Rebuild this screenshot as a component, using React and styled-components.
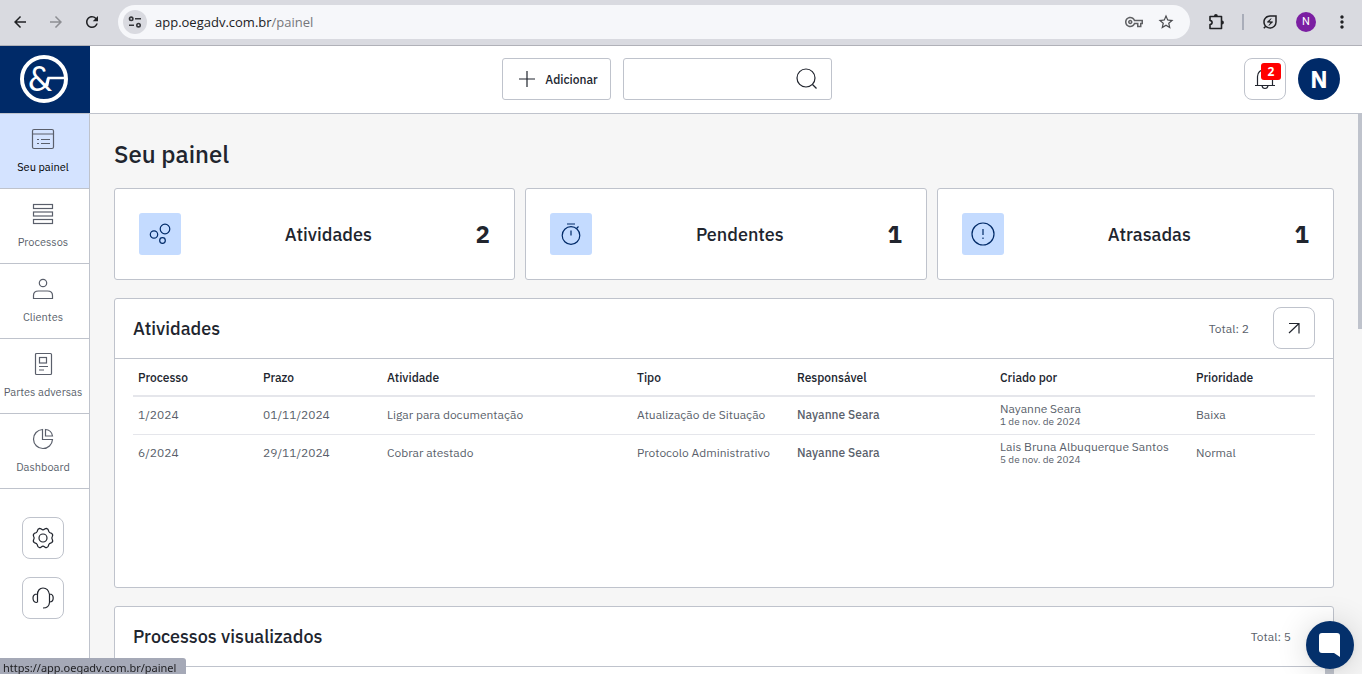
import React from 'react';
import styled, { createGlobalStyle, css } from 'styled-components';
import {
  MdArrowBack,
  MdArrowForward,
  MdRefresh,
  MdStarBorder,
  MdMoreVert,
  MdOutlineVpnKey,
  MdOutlineEnergySavingsLeaf,
} from 'react-icons/md';

const GlobalStyle = createGlobalStyle`
  *, *::before, *::after {
    box-sizing: border-box;
  }

  body {
    margin: 0;
    overflow: hidden;
    color: #21252e;
    background: #f6f6f6;
    font-family: "IBM Plex Sans", "Noto Sans", sans-serif;
    font-size: 12px;
  }

  button, input {
    font: inherit;
    color: inherit;
  }

  a {
    color: inherit;
    text-decoration: none;
  }

  h1, h2, p {
    margin: 0;
  }
`;

/* ---------- data ---------- */

const menu = [
  { label: 'Seu painel', icon: 'panel', active: true },
  { label: 'Processos', icon: 'rows' },
  { label: 'Clientes', icon: 'user' },
  { label: 'Partes adversas', icon: 'paper' },
  { label: 'Dashboard', icon: 'pie' },
];

const stats = [
  { label: 'Atividades', value: 2, icon: 'bubbles' },
  { label: 'Pendentes', value: 1, icon: 'timer' },
  { label: 'Atrasadas', value: 1, icon: 'alert' },
];

const columns = [
  { label: 'Processo', width: 125 },
  { label: 'Prazo', width: 124 },
  { label: 'Atividade', width: 250 },
  { label: 'Tipo', width: 160 },
  { label: 'Responsável', width: 203 },
  { label: 'Criado por', width: 196 },
  { label: 'Prioridade', width: 124 },
];

const activities = [
  {
    process: '1/2024',
    due: '01/11/2024',
    title: 'Ligar para documentação',
    type: 'Atualização de Situação',
    owner: 'Nayanne Seara',
    author: 'Nayanne Seara',
    created: '1 de nov. de 2024',
    priority: 'Baixa',
  },
  {
    process: '6/2024',
    due: '29/11/2024',
    title: 'Cobrar atestado',
    type: 'Protocolo Administrativo',
    owner: 'Nayanne Seara',
    author: 'Lais Bruna Albuquerque Santos',
    created: '5 de nov. de 2024',
    priority: 'Normal',
  },
];

/* ---------- icons ---------- */

const shapes = {
  panel: (
    <>
      <rect x="1.5" y="2.5" width="21" height="19" rx="1.5" />
      <path d="M1.5 7h21M6 12.5h2M10 12.5h9M6 16.5h2M10 16.5h9" />
    </>
  ),
  rows: (
    <>
      <rect x="2.5" y="2.5" width="19" height="4" />
      <rect x="2.5" y="10" width="19" height="4" />
      <rect x="2.5" y="17.5" width="19" height="4" />
    </>
  ),
  user: (
    <>
      <circle cx="12" cy="6" r="3.7" />
      <path d="M2.5 21.5v-3c0-3 2-4.5 5-4.5h9c3 0 5 1.5 5 4.5v3z" />
    </>
  ),
  paper: (
    <>
      <rect x="4.5" y="1.5" width="16" height="21" rx="1" />
      <rect x="8.5" y="5.5" width="7" height="5.5" />
      <path d="M8 14.5h9M8 18h5" />
    </>
  ),
  pie: (
    <>
      <path d="M11.5 2.5a9.5 9.5 0 1 0 10 10h-10z" />
      <path d="M14.5 2.5v6.5h7a7.5 7.5 0 0 0-7-6.5z" />
    </>
  ),
  gear: (
    <>
      <path d="M8.5 2.3c1.6 0 2 1.5 3.5 1.5s1.9-1.5 3.5-1.5c2 .4 2 2 2.2 3 .4 1.5 1.5 1.8 3 2.1 1.6.9 1 2.3.5 3.3-.5.9-.5 1.7 0 2.6.5 1 1.1 2.4-.5 3.3-1.5.3-2.6.6-3 2.1-.2 1-.2 2.6-2.2 3-1.6 0-2-1.5-3.5-1.5s-1.9 1.5-3.5 1.5c-2-.4-2-2-2.2-3-.4-1.5-1.5-1.8-3-2.1-1.6-.9-1-2.3-.5-3.3.5-.9.5-1.7 0-2.6-.5-1-1.1-2.4.5-3.3 1.5-.3 2.6-.6 3-2.1.2-1 .2-2.6 2.2-3z" />
      <circle cx="12" cy="12" r="4" />
    </>
  ),
  headset: (
    <path d="M6.5 16.5V8.5C6.5 4.5 8.8 2 12 2s5.8 2.5 6.5 6.5v8c-.3 3.5-2.5 5.5-6.5 5.5M6 8c-2.5 0-4 1.6-4 4s1.5 4.5 4 4.5M18.5 8c2.3 0 3.7 1.7 3.7 4s-1.4 4-3.7 4" />
  ),
  bell: (
    <path d="M2 18.5h20M4.5 18.5V9.5C4.5 5.5 7.5 2.5 12 2.5s7.5 3 7.5 7v9M9 18.5c.4 4 5.6 4 6 0" />
  ),
  search: (
    <>
      <circle cx="11" cy="11" r="9" />
      <path d="M17.5 17.5l4 4" />
    </>
  ),
  plus: <path d="M12 4v16M4 12h16" />,
  arrow: <path d="M7 7.5h10v10M16.7 7.8L7 17" />,
  bubbles: (
    <>
      <circle cx="6" cy="12.5" r="3.7" />
      <circle cx="17" cy="7" r="4.8" />
      <circle cx="14.5" cy="18.5" r="2.8" />
    </>
  ),
  timer: (
    <>
      <circle cx="12" cy="13.5" r="8.8" />
      <path d="M8 2h8M12 8.5v5M17.5 6.5l2-2" />
    </>
  ),
  alert: (
    <>
      <circle cx="12" cy="12" r="11" />
      <path d="M12 7v6M12 15.5v1.5" />
    </>
  ),
};

const Icon = ({ name, size = 24 }) => (
  <svg
    width={size}
    height={size}
    viewBox="0 0 24 24"
    fill="none"
    stroke="currentColor"
    strokeWidth="1.2"
    aria-hidden="true"
  >
    {shapes[name]}
  </svg>
);

const Logo = () => (
  <svg width="48" height="48" viewBox="0 0 48 48" role="img" aria-label="OEG Adv">
    <circle cx="24" cy="24" r="22" fill="none" stroke="#fff" strokeWidth="4" />
    <text x="8" y="36" fill="#fff" fontFamily="Lato, sans-serif" fontSize="34">
      &amp;
    </text>
    <path d="M27 31L28.5 23H45" fill="none" stroke="#fff" strokeWidth="2.6" />
  </svg>
);

const SiteInfoIcon = () => (
  <svg width="14" height="14" viewBox="0 0 14 14" fill="none" stroke="#333438" strokeWidth="1.6" aria-hidden="true">
    <circle cx="3.2" cy="3.8" r="1.7" />
    <path d="M7 3.8h6M1 10.2h5" />
    <circle cx="10.5" cy="10.2" r="1.7" />
  </svg>
);

const PuzzleIcon = () => (
  <svg width="20" height="20" viewBox="0 0 20 20" aria-hidden="true">
    <path
      d="M4 4.5h11.5v12H4v-4c2.8-.3 2.8-3.7 0-4z"
      fill="none"
      stroke="#202124"
      strokeWidth="1.6"
      strokeLinejoin="round"
    />
    <path d="M8 4a1.9 1.9 0 0 1 3.8 0zM16 8.6a1.9 1.9 0 0 1 0 3.8z" fill="#202124" />
  </svg>
);

/* ---------- browser bar ---------- */

const BrowserBar = styled.div`
  display: flex;
  align-items: center;
  flex: none;
  height: 46px;
  padding: 0 10px 2px;
  border-bottom: 1px solid #b0b1b8;
  background: #d9dae0;
`;

const BrowserButton = styled.button`
  display: flex;
  align-items: center;
  justify-content: center;
  width: 20px;
  height: 20px;
  margin-right: ${({ $gap }) => $gap || 0}px;
  padding: 0;
  border: 0;
  background: none;
  color: ${({ $muted }) => ($muted ? '#8d8e93' : '#202124')};
  font-size: ${({ $size }) => $size || 18}px;
`;

const AddressBar = styled.div`
  display: flex;
  align-items: center;
  flex: 1;
  height: 34px;
  margin-right: 16px;
  padding: 0 14px 0 5px;
  border-radius: 17px;
  background: #f6f7fa;
`;

const SiteInfo = styled.button`
  display: flex;
  align-items: center;
  justify-content: center;
  width: 24px;
  height: 24px;
  padding: 0;
  border: 0;
  border-radius: 50%;
  background: #d9dae0;
`;

const Url = styled.span`
  flex: 1;
  padding-left: 8px;
  color: #202124;
  font-family: "Open Sans", sans-serif;
  font-size: 13px;

  span {
    color: #75767b;
  }
`;

const BarDivider = styled.span`
  width: 2px;
  height: 16px;
  margin-right: 16px;
  background: #a9adb9;
`;

const ProfileDot = styled.button`
  width: 20px;
  height: 20px;
  margin-right: 16px;
  padding: 0;
  border: 0;
  border-radius: 50%;
  background: #7b1fa2;
  color: #fff;
  font-family: Roboto, sans-serif;
  font-size: 11px;
`;

/* ---------- page frame ---------- */

const Page = styled.div`
  display: flex;
  flex-direction: column;
  height: 100vh;
  overflow: hidden;
`;

const Header = styled.header`
  display: flex;
  align-items: center;
  flex: none;
  height: 68px;
  padding: 0 22px 1px 0;
  border-bottom: 1px solid #bfc3cc;
  background: #fff;
`;

const Brand = styled.a`
  display: flex;
  align-items: center;
  justify-content: center;
  align-self: flex-start;
  width: 90px;
  height: 67px;
  padding: 0 2px 1px 0;
  background: #002a68;
`;

const Tools = styled.div`
  display: flex;
  justify-content: center;
  flex: 1;
  gap: 12px;
`;

const AddButton = styled.button`
  display: flex;
  align-items: center;
  gap: 6px;
  height: 42px;
  padding: 0 12px;
  border: 1px solid #bfc3cc;
  border-radius: 3px;
  background: #fff;
  font-weight: 500;
`;

const SearchBox = styled.label`
  display: flex;
  align-items: center;
  width: 209px;
  height: 42px;
  padding: 0 12px;
  border: 1px solid #bfc3cc;
  border-radius: 3px;
`;

const SearchInput = styled.input`
  flex: 1;
  min-width: 0;
  border: 0;
  outline: 0;
  background: none;
`;

const SquareButton = styled.button`
  position: relative;
  display: flex;
  align-items: center;
  justify-content: center;
  flex: none;
  width: 42px;
  height: 42px;
  padding: 0;
  border: 1px solid #bfc3cc;
  border-radius: 8px;
  background: #fff;
`;

const Badge = styled.span`
  position: absolute;
  top: 4px;
  right: 4px;
  width: 20px;
  border-radius: 3px;
  background: #f00;
  color: #fff;
  font-family: "Open Sans", sans-serif;
  font-size: 12px;
  font-weight: 700;
  line-height: 17px;
`;

const Avatar = styled.button`
  width: 42px;
  height: 42px;
  margin-left: 12px;
  padding: 0 0 1px;
  border: 0;
  border-radius: 50%;
  background: #002a68;
  color: #fff;
  font-size: 24px;
  font-weight: 700;
`;

const Body = styled.div`
  display: flex;
  flex: 1;
  min-height: 0;
`;

/* ---------- sidebar ---------- */

const Sidebar = styled.aside`
  flex: none;
  width: 90px;
  border-right: 1px solid #bfc3cc;
  background: #fff;
`;

const MenuItem = styled.a`
  display: flex;
  flex-direction: column;
  align-items: center;
  gap: 8px;
  height: 75px;
  padding: 13px 3px 0 0;
  border-bottom: 1px solid #bfc3cc;
  color: #5a5f6b;
  font-size: 11px;
  line-height: 16px;
  white-space: nowrap;

  ${({ $active }) =>
    $active &&
    css`
      background: #d4e3ff;

      span {
        color: #000;
      }
    `}
`;

const SideActions = styled.div`
  display: flex;
  flex-direction: column;
  align-items: center;
  gap: 18px;
  padding: 28px 3px 0 0;
`;

/* ---------- content ---------- */

const Main = styled.main`
  display: flex;
  flex: 1;
  min-width: 0;
`;

const Content = styled.div`
  flex: 1;
  min-width: 0;
  padding: 24px 24px 0;
`;

const ScrollThumb = styled.div`
  flex: none;
  width: 4px;
  height: 215px;
  background: #bfc3cc;
`;

const Title = styled.h1`
  margin-bottom: 18px;
  font-size: 24px;
  font-weight: 500;
  line-height: 32px;
`;

const Stats = styled.section`
  display: grid;
  grid-template-columns: 401fr 402fr 397fr;
  gap: 10px;
  margin-bottom: 18px;
`;

const StatCard = styled.div`
  display: flex;
  align-items: center;
  justify-content: space-between;
  height: 92px;
  padding: 0 24px;
  border: 1px solid #bfc3cc;
  border-radius: 3px;
  background: #fff;
`;

const StatIcon = styled.span`
  display: flex;
  align-items: center;
  justify-content: center;
  width: 42px;
  height: 42px;
  border-radius: 3px;
  background: #c4dbff;
  color: #002a68;
`;

const StatLabel = styled.p`
  font-size: 18px;
  font-weight: 500;
`;

const StatValue = styled.strong`
  font-size: 24px;
  font-weight: 700;
`;

const Panel = styled.section`
  min-height: 290px;
  margin-bottom: 18px;
  border: 1px solid #bfc3cc;
  border-radius: 3px;
  background: #fff;
`;

const PanelHeader = styled.div`
  display: flex;
  align-items: center;
  gap: 24px;
  height: 60px;
  padding: 0 18px 1px;
  border-bottom: 1px solid #bfc3cc;
`;

const PanelTitle = styled.h2`
  flex: 1;
  font-size: 18px;
  font-weight: 500;
`;

const Total = styled.span`
  margin-right: ${({ $alone }) => ($alone ? 24 : 0)}px;
  color: #5a5f6b;
`;

const PanelBody = styled.div`
  padding: 0 18px;
`;

const PanelScroll = styled.div`
  width: 8px;
  height: 60px;
  margin-left: auto;
  background: #bfc3cc;
`;

const Table = styled.table`
  width: 100%;
  border-collapse: collapse;
  table-layout: fixed;
  color: #5a5f6b;
  text-align: left;

  th {
    height: 37px;
    padding: 0 5px;
    border-bottom: 2px solid #e5e6eb;
    color: #21252e;
    font-weight: 500;
  }

  td {
    height: 38px;
    padding: 0 5px;
    line-height: 14px;
    white-space: nowrap;
  }

  tbody tr + tr td {
    border-top: 1px solid #e5e6eb;
  }
`;

const Owner = styled.td`
  font-weight: 500;
`;

const Small = styled.div`
  font-size: 10px;
  line-height: 12px;
`;

/* ---------- floating parts ---------- */

const ChatButton = styled.button`
  position: fixed;
  right: 8px;
  bottom: 5px;
  display: flex;
  align-items: center;
  justify-content: center;
  width: 48px;
  height: 48px;
  padding: 0;
  border: 0;
  border-radius: 50%;
  background: #04306b;
  box-shadow: 0 1px 6px rgba(0, 0, 0, 0.06), 0 2px 32px rgba(0, 0, 0, 0.16);
`;

const StatusBar = styled.div`
  position: fixed;
  bottom: 0;
  left: 0;
  height: 16px;
  padding: 0 10px 0 3px;
  border-top-right-radius: 3px;
  background: #a5a9b7;
  color: #202124;
  font-family: "Noto Sans", sans-serif;
  font-size: 11px;
  line-height: 20px;
`;

const App = () => {
  return (
    <>
      <GlobalStyle />
      <Page>
        <BrowserBar>
          <BrowserButton $gap={16} aria-label="Voltar"><MdArrowBack /></BrowserButton>
          <BrowserButton $gap={16} $muted aria-label="Avançar"><MdArrowForward /></BrowserButton>
          <BrowserButton $gap={16} aria-label="Recarregar"><MdRefresh /></BrowserButton>
          <AddressBar>
            <SiteInfo aria-label="Informações do site"><SiteInfoIcon /></SiteInfo>
            <Url>app.oegadv.com.br<span>/painel</span></Url>
            <BrowserButton $gap={12} aria-label="Senhas"><MdOutlineVpnKey color="#5f6063" /></BrowserButton>
            <BrowserButton aria-label="Favoritos"><MdStarBorder color="#4a4b4f" /></BrowserButton>
          </AddressBar>
          <BrowserButton $gap={16} aria-label="Extensões"><PuzzleIcon /></BrowserButton>
          <BarDivider />
          <BrowserButton $gap={16} aria-label="Economia de energia"><MdOutlineEnergySavingsLeaf /></BrowserButton>
          <ProfileDot>N</ProfileDot>
          <BrowserButton $size={20} aria-label="Menu"><MdMoreVert /></BrowserButton>
        </BrowserBar>

        <Header>
          <Brand href="#"><Logo /></Brand>
          <Tools>
            <AddButton><Icon name="plus" />Adicionar</AddButton>
            <SearchBox>
              <SearchInput type="text" aria-label="Pesquisar" />
              <Icon name="search" />
            </SearchBox>
          </Tools>
          <SquareButton aria-label="Notificações">
            <Icon name="bell" />
            <Badge>2</Badge>
          </SquareButton>
          <Avatar>N</Avatar>
        </Header>

        <Body>
          <Sidebar>
            <nav>
              {menu.map((item) => (
                <MenuItem key={item.label} href="#" $active={item.active}>
                  <Icon name={item.icon} />
                  <span>{item.label}</span>
                </MenuItem>
              ))}
            </nav>
            <SideActions>
              <SquareButton aria-label="Configurações"><Icon name="gear" /></SquareButton>
              <SquareButton aria-label="Suporte"><Icon name="headset" /></SquareButton>
            </SideActions>
          </Sidebar>

          <Main>
            <Content>
              <Title>Seu painel</Title>

              <Stats>
                {stats.map((stat) => (
                  <StatCard key={stat.label}>
                    <StatIcon><Icon name={stat.icon} /></StatIcon>
                    <StatLabel>{stat.label}</StatLabel>
                    <StatValue>{stat.value}</StatValue>
                  </StatCard>
                ))}
              </Stats>

              <Panel>
                <PanelHeader>
                  <PanelTitle>Atividades</PanelTitle>
                  <Total>Total: 2</Total>
                  <SquareButton aria-label="Abrir atividades"><Icon name="arrow" /></SquareButton>
                </PanelHeader>
                <PanelBody>
                  <Table>
                    <colgroup>
                      {columns.map((col) => (
                        <col key={col.label} width={col.width} />
                      ))}
                    </colgroup>
                    <thead>
                      <tr>
                        {columns.map((col) => (
                          <th key={col.label}>{col.label}</th>
                        ))}
                      </tr>
                    </thead>
                    <tbody>
                      {activities.map((row) => (
                        <tr key={row.process}>
                          <td>{row.process}</td>
                          <td>{row.due}</td>
                          <td>{row.title}</td>
                          <td>{row.type}</td>
                          <Owner>{row.owner}</Owner>
                          <td>
                            {row.author}
                            <Small>{row.created}</Small>
                          </td>
                          <td>{row.priority}</td>
                        </tr>
                      ))}
                    </tbody>
                  </Table>
                </PanelBody>
              </Panel>

              <Panel>
                <PanelHeader>
                  <PanelTitle>Processos visualizados</PanelTitle>
                  <Total $alone>Total: 5</Total>
                </PanelHeader>
                <PanelScroll />
              </Panel>
            </Content>
            <ScrollThumb />
          </Main>
        </Body>
      </Page>

      <ChatButton aria-label="Abrir chat">
        <svg width="24" height="26" viewBox="0 0 24 26" fill="#fff" aria-hidden="true">
          <path d="M4 1h15a3 3 0 0 1 3 3v21l-6-4H4a3 3 0 0 1-3-3V4a3 3 0 0 1 3-3z" />
        </svg>
      </ChatButton>
      <StatusBar>https://app.oegadv.com.br/painel</StatusBar>
    </>
  );
};

export default App;
